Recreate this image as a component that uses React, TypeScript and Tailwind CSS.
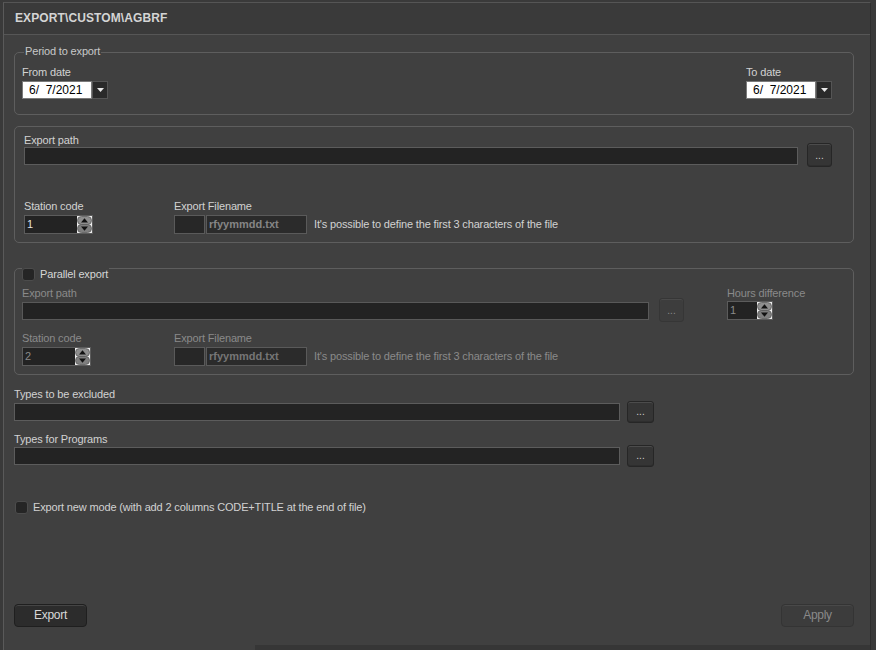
import React from "react";

function SpinArrows() {
  return (
    <svg width="15" height="17" viewBox="0 0 15 17" className="block shrink-0">
      <rect width="15" height="17" fill="#ececec" />
      <rect x="0.5" y="0.5" width="14" height="8" rx="4" fill="#8e8e8e" stroke="#5a5a5a" strokeWidth="0.8" />
      <rect x="0.5" y="8.5" width="14" height="8" rx="4" fill="#7e7e7e" stroke="#5a5a5a" strokeWidth="0.8" />
      <path d="M7.5 2.2 L11 6.6 H4 Z" fill="#111" />
      <path d="M7.5 14.8 L11 10.4 H4 Z" fill="#111" />
    </svg>
  );
}

function Spin({ value, disabled, w }: { value: string; disabled?: boolean; w: string }) {
  return (
    <div className={`flex h-[19px] items-stretch border border-[#5c5c5c] bg-[#232323] ${w}`}>
      <div className={`flex flex-1 items-center pl-[2px] ${disabled ? "text-[#8a8a8a]" : "text-[#e2e2e2]"}`}>{value}</div>
      <SpinArrows />
    </div>
  );
}

function DateBox() {
  return (
    <div className="flex h-[18px]">
      <div className="flex w-[70px] items-center whitespace-pre border border-[#7a7a7a] bg-white pl-[6px] text-[12px] tracking-[0px] text-black">
        {"6/  7/2021"}
      </div>
      <div className="flex w-[16px] items-center justify-center border border-[#555] bg-[#2a2a2a]">
        <svg width="7" height="4" viewBox="0 0 7 4" className="block">
          <path d="M0 0 H7 L3.5 4 Z" fill="#e8e8e8" />
        </svg>
      </div>
    </div>
  );
}

function DotsButton({ disabled, size }: { disabled?: boolean; size: string }) {
  return (
    <div
      className={`flex items-end justify-center rounded-[3px] border ${size} ${
        disabled
          ? "border-[#363636] bg-[#3d3d3d] text-[#8a8a8a] shadow-[inset_0_1px_0_#4a4a4a]"
          : "border-[#262626] bg-[#353535] text-[#d0d0d0] shadow-[inset_0_1px_0_#4c4c4c,inset_0_-1px_0_#2e2e2e]"
      }`}
    >
      <span className="pb-[5px] text-[10px] leading-[10px] tracking-[0px]">...</span>
    </div>
  );
}

function Checkbox() {
  return <div className="h-[13px] w-[13px] shrink-0 rounded-[3px] border border-[#4c4c4c] bg-[#252525]" />;
}

function FileName({ disabled }: { disabled?: boolean }) {
  return (
    <div className="flex h-[19px] items-stretch">
      <div className="w-[31px] border border-[#5a5a5a] bg-[#272727]" />
      <div
        className={`ml-[1px] flex w-[101px] items-center border border-[#5a5a5a] bg-[#2b2b2b] pl-[2px] text-[11px] font-bold tracking-[0px] ${
          disabled ? "text-[#767676]" : "text-[#858585]"
        }`}
      >
        rfyymmdd.txt
      </div>
    </div>
  );
}

export default function App() {
  return (
    <div className="flex h-[650px] w-[876px] bg-[#3a3a3a] pl-[3px] pt-[2px] font-['Liberation_Sans',Arial,sans-serif] text-[11px] leading-[13px] tracking-[-0.15px] text-[#d2d2d2]">
      <div className="flex w-[868px] flex-col border-l border-r border-t border-l-[#5a5a5a] border-r-[#2e2e2e] border-t-[#555] bg-[#404040]">
        {/* Title bar */}
        <div className="flex h-[32px] shrink-0 items-center border-b border-b-[#565656] bg-[#3a3a3a] pl-[11px]">
          <span className="text-[12px] font-bold tracking-[0.1px] text-[#d4d4d4]">EXPORT\CUSTOM\AGBRF</span>
        </div>

        <div className="flex flex-1 flex-col pl-[10px] pr-[16px]">
          {/* Period to export */}
          <div className="relative mt-[17px] rounded-[5px] border border-[#5e5e5e] pb-[15px] pl-[7px] pr-[21px] pt-[13px]">
            <div className="absolute -top-[8px] left-[9px] bg-[#404040] px-[1px] text-[#c8c8c8]">Period to export</div>
            <div className="flex justify-between">
              <div className="flex flex-col">
                <div className="h-[13px]">From date</div>
                <div className="mt-[2px]">
                  <DateBox />
                </div>
              </div>
              <div className="flex flex-col">
                <div className="h-[13px]">To date</div>
                <div className="mt-[2px]">
                  <DateBox />
                </div>
              </div>
            </div>
          </div>

          {/* Export path */}
          <div className="mt-[11px] rounded-[5px] border border-[#5e5e5e] pb-[8px] pl-[9px] pr-[21px] pt-[7px]">
            <div className="h-[13px]">Export path</div>
            <div className="flex h-[20px] items-start">
              <div className="h-[18px] flex-1 border border-[#5c5c5c] bg-[#232323]" />
              <div className="ml-[9px] -mt-[4px]">
                <DotsButton size="h-[24px] w-[25px]" />
              </div>
            </div>
            <div className="mt-[33px] flex">
              <div className="flex w-[150px] flex-col">
                <div className="h-[13px]">Station code</div>
                <div className="mt-[2px]">
                  <Spin value="1" w="w-[69px]" />
                </div>
              </div>
              <div className="flex flex-col">
                <div className="h-[13px]">Export Filename</div>
                <div className="mt-[2px] flex items-center">
                  <FileName />
                  <span className="ml-[7px]">It's possible to define the first 3 characters of the file</span>
                </div>
              </div>
            </div>
          </div>

          {/* Parallel export */}
          <div className="relative mt-[25px] rounded-[5px] border border-[#5e5e5e] pb-[8px] pl-[7px] pr-[21px] pt-[18px]">
            <div className="absolute -top-[1px] left-[7px] flex h-[13px] items-center bg-[#404040] pr-[1px]">
              <Checkbox />
              <span className="ml-[5px] text-[#d6d6d6]">Parallel export</span>
            </div>
            <div className="flex items-start text-[#8a8a8a]">
              <div className="flex w-[627px] flex-col">
                <div className="h-[13px]">Export path</div>
                <div className="mt-[2px] h-[18px] border border-[#595959] bg-[#232323]" />
              </div>
              <div className="ml-[10px] mt-[11px]">
                <DotsButton disabled size="h-[24px] w-[25px]" />
              </div>
              <div className="ml-[43px] flex flex-col">
                <div className="h-[13px]">Hours difference</div>
                <div className="mt-[1px]">
                  <Spin value="1" disabled w="w-[46px]" />
                </div>
              </div>
            </div>
            <div className="mt-[10px] flex text-[#8a8a8a]">
              <div className="flex w-[152px] flex-col">
                <div className="h-[13px]">Station code</div>
                <div className="mt-[2px]">
                  <Spin value="2" disabled w="w-[69px]" />
                </div>
              </div>
              <div className="flex flex-col">
                <div className="h-[13px]">Export Filename</div>
                <div className="mt-[2px] flex items-center">
                  <FileName disabled />
                  <span className="ml-[7px]">It's possible to define the first 3 characters of the file</span>
                </div>
              </div>
            </div>
          </div>

          {/* Types */}
          <div className="mt-[13px] h-[13px]">Types to be excluded</div>
          <div className="mt-[2px] flex h-[18px] items-center">
            <div className="h-[18px] w-[606px] border border-[#5c5c5c] bg-[#232323]" />
            <div className="ml-[7px]">
              <DotsButton size="h-[22px] w-[27px]" />
            </div>
          </div>
          <div className="mt-[12px] h-[13px]">Types for Programs</div>
          <div className="mt-[1px] flex h-[18px] items-center">
            <div className="h-[18px] w-[606px] border border-[#5c5c5c] bg-[#232323]" />
            <div className="ml-[7px]">
              <DotsButton size="h-[22px] w-[27px]" />
            </div>
          </div>

          <div className="mt-[36px] flex h-[13px] items-center pl-[1px]">
            <Checkbox />
            <span className="ml-[5px]">Export new mode (with add 2 columns CODE+TITLE at the end of file)</span>
          </div>

          {/* Bottom buttons */}
          <div className="mt-auto flex justify-between pb-[18px]">
            <div className="flex h-[23px] w-[73px] items-center justify-center rounded-[4px] border border-[#1f1f1f] bg-[#2c2c2c] text-[12px] tracking-[-0.3px] text-[#d8d8d8] shadow-[inset_0_1px_0_#454545]">
              Export
            </div>
            <div className="flex h-[23px] w-[73px] items-center justify-center rounded-[4px] border border-[#343434] bg-[#3c3c3c] text-[12px] tracking-[-0.3px] text-[#8a8a8a] shadow-[inset_0_1px_0_#494949]">
              Apply
            </div>
          </div>
        </div>

        <div className="flex h-[5px] shrink-0">
          <div className="w-[251px]" />
          <div className="flex-1 bg-[#363636]" />
        </div>
      </div>
    </div>
  );
}
